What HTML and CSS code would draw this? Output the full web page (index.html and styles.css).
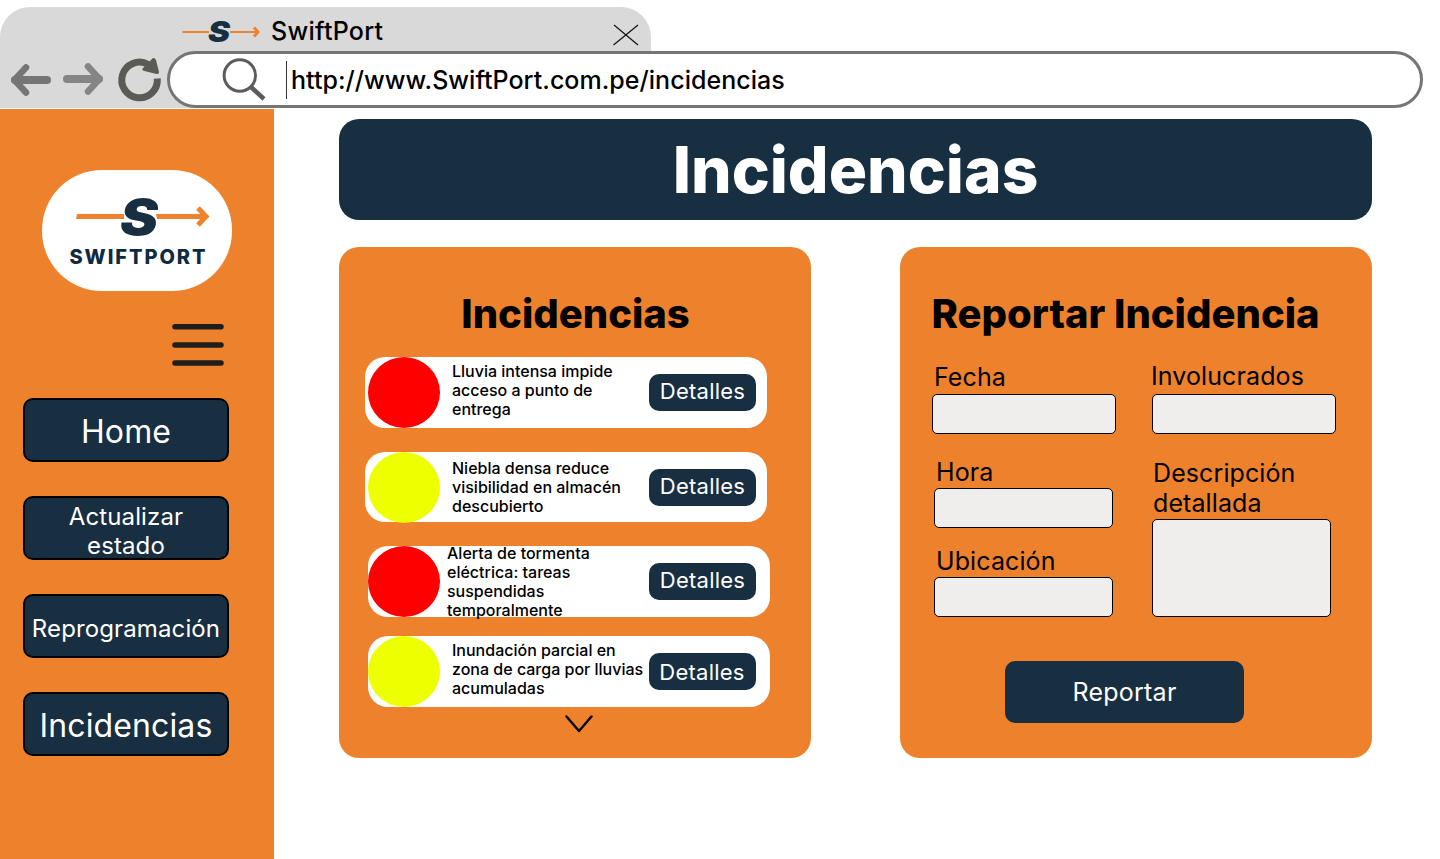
FILE: index.html
```html
<!DOCTYPE html>
<html lang="es">
<head>
<meta charset="utf-8">
<title>SwiftPort</title>
<link rel="stylesheet" href="styles.css">
</head>
<body>
<header class="browser">
  <div class="tab">
    <svg class="tab-logo" width="78" height="24" viewBox="0 0 78 24">
      <path d="M0.500 12H27M48 12H75" fill="none" stroke="#ee822d" stroke-width="2.200"/>
      <path d="M72 7.500l4 4.500-4 4.500" fill="none" stroke="#ee822d" stroke-width="3"/>
      <text class="mark" x="26" y="22" font-size="29" textLength="22" lengthAdjust="spacingAndGlyphs">S</text>
    </svg>
    <span class="tab-name">SwiftPort</span>
    <svg class="tab-close" width="26" height="22" viewBox="0 0 26 22"><path d="M1 1l24 20M25 1L.5 21" stroke="#111" stroke-width="1.200"/></svg>
  </div>
  <div class="toolbar">
    <svg class="tools" width="167" height="57" viewBox="0 0 167 57">
      <g fill="none" stroke-linecap="round" stroke-linejoin="round">
        <path d="M47 29H15" stroke="#757575" stroke-width="8"/>
        <path d="M26 16.500L14.500 29l11.500 12.500" stroke="#757575" stroke-width="6.500"/>
        <path d="M67 28h32" stroke="#858585" stroke-width="8"/>
        <path d="M88 15.500L99.500 28 88 40.500" stroke="#858585" stroke-width="6.500"/>
      </g>
      <path d="M157.300 27.500A17.800 17.800 0 1 1 148 13.300" fill="none" stroke="#5a5a57" stroke-width="7"/>
      <path d="M151.500 8.500Q154 5.500 156 9l3 12q.3 2.500-2.500 2l-12-3q-3.500-1-1.500-3z" fill="#5a5a57"/>
    </svg>
    <div class="address">
      <svg width="44" height="44" viewBox="0 0 44 44" fill="none" stroke="#5c5c5c">
        <circle cx="17.800" cy="17.500" r="15.700" stroke-width="3"/><path d="M29 29l13 12" stroke-width="4.500"/>
      </svg>
      <span class="caret"></span>
      <span class="url">http://www.SwiftPort.com.pe/incidencias</span>
    </div>
  </div>
</header>
<div class="page">
  <aside class="sidebar">
    <div class="brand">
      <svg width="190" height="121" viewBox="0 0 190 121">
        <path d="M35 44L34 49H82V44zM114 44H161V49H115z" fill="#ee822d"/>
        <path d="M156 38l8 8.500-8 8.500" fill="none" stroke="#ee822d" stroke-width="5"/>
        <text class="mark" x="78" y="65" font-size="50" textLength="38" lengthAdjust="spacingAndGlyphs">S</text>
        <text class="wordmark" x="27.500" y="94" font-size="20" textLength="136">SWIFTPORT</text>
      </svg>
    </div>
    <svg class="menu" width="52" height="42" viewBox="0 0 52 42"><path d="M3 2.800H49M3 21H49M3 39H49" stroke="#1e1e1e" stroke-width="5.500" stroke-linecap="round"/></svg>
    <nav class="nav">
      <a class="nav-item large">Home</a>
      <a class="nav-item double">Actualizar estado</a>
      <a class="nav-item">Reprogramación</a>
      <a class="nav-item large">Incidencias</a>
    </nav>
  </aside>
  <main class="main">
    <h1 class="banner">Incidencias</h1>
    <div class="panels">
      <section class="panel list">
        <h2>Incidencias</h2>
        <article class="incident">
          <span class="level red"></span>
          <p class="summary">Lluvia intensa impide acceso a punto de entrega</p>
          <a class="details">Detalles</a>
        </article>
        <article class="incident second">
          <span class="level yellow"></span>
          <p class="summary lower">Niebla densa reduce visibilidad en almacén descubierto</p>
          <a class="details">Detalles</a>
        </article>
        <article class="incident third inset">
          <span class="level red"></span>
          <p class="summary tall">Alerta de tormenta eléctrica: tareas suspendidas temporalmente</p>
          <a class="details">Detalles</a>
        </article>
        <article class="incident fourth inset">
          <span class="level yellow"></span>
          <p class="summary">Inundación parcial en<br>zona de carga por lluvias acumuladas</p>
          <a class="details last">Detalles</a>
        </article>
        <svg class="more" width="28" height="18" viewBox="0 0 28 18"><path d="M1.500 1.500L14 16 26.500 1.500" fill="none" stroke="#000" stroke-width="2.400" stroke-linecap="round" stroke-linejoin="round"/></svg>
      </section>
      <section class="panel report">
        <h2>Reportar Incidencia</h2>
        <div class="form">
          <div class="column">
            <label class="date">Fecha</label>
            <div class="field wide"></div>
            <label class="time">Hora</label>
            <div class="field indent"></div>
            <label class="place">Ubicación</label>
            <div class="field indent"></div>
          </div>
          <div class="column">
            <label class="people">Involucrados</label>
            <div class="field wide"></div>
            <label class="description">Descripción detallada</label>
            <div class="field area"></div>
          </div>
        </div>
        <a class="submit">Reportar</a>
      </section>
    </div>
  </main>
</div>
</body>
</html>
```
FILE: styles.css
```css
* { box-sizing: border-box; }
body { margin: 0; height: 859px; overflow: hidden; background: #fff; color: #000; font-family: Inter, "Liberation Sans", sans-serif; font-weight: 400; }
svg { display: block; flex: none; }
h1, h2, p { margin: 0; }
.browser { height: 109px; padding-top: 7px; }
.tab { display: flex; width: 651px; height: 44px; padding-left: 182px; background: #d9d9d9; border-radius: 30px 30px 0 0; }
.tab-logo { margin-top: 13px; overflow: visible; }
.tab-name { width: 342px; margin: 9px 0 0 11px; font-size: 25px; line-height: 30px; font-weight: 500; letter-spacing: 0.28px; white-space: nowrap; }
.tab-close { margin-top: 17px; }
.toolbar { display: flex; height: 57px; background: linear-gradient(#d9d9d9, #d9d9d9) 0 0 / 651px 57px no-repeat; }
.address { display: flex; width: 1256px; height: 57px; padding-left: 52px; background: #fff; border: 3px solid #757575; border-radius: 29px; }
.address svg { margin-top: 4px; }
.caret { flex: none; width: 1px; height: 38px; margin: 7px 4px 0 20px; background: #333; }
.url { margin-top: 11px; font-size: 25px; line-height: 30px; font-weight: 500; letter-spacing: 0.03px; white-space: nowrap; }
.mark { font-family: Inter, sans-serif; font-weight: 900; font-style: italic; fill: #182f42; }
.wordmark { font-family: Inter, sans-serif; font-weight: 800; fill: #0f2b40; }

.page { display: flex; height: 750px; }
.sidebar { width: 274px; padding: 61px 0 0 23px; background: #ee812c; flex: none; }
.brand { width: 190px; height: 121px; margin-left: 19px; background: #fff; border-radius: 60px; }
.menu { margin: 33px 0 32px 149px; }
.nav { display: flex; flex-direction: column; gap: 34px; width: 206px; }
.nav-item { height: 64px; padding-top: 18px; background: #182e41; border: 2px solid #000; border-radius: 10px; color: #fff; font-size: 24px; line-height: 29px; letter-spacing: 0.12px; text-align: center; }
.nav-item.large { padding-top: 12px; font-size: 32px; line-height: 39px; }
.nav-item.double { padding: 4px 30px 0; }

.main { width: 1033px; margin: 10px 0 0 65px; }
.banner { height: 101px; background: #182e41; border-radius: 20px; color: #fff; font-size: 64px; line-height: 101px; font-weight: 800; text-align: center; }
.panels { display: flex; justify-content: space-between; margin-top: 27px; }
.panel { width: 472px; height: 511px; padding-top: 43px; background: #ee812c; border-radius: 20px; }
.panel h2 { font-size: 40px; line-height: 48px; font-weight: 800; white-space: nowrap; text-align: center; }
.list h2 { padding-left: 1px; }
.report h2 { padding-right: 21px; }
.incident { display: flex; width: 402px; height: 71px; margin: 19px 0 0 26px; padding-left: 3px; background: #fff; border-radius: 20px; }
.incident.second { height: 70px; margin-top: 24px; }
.incident.third { margin-top: 24px; }
.incident.fourth { margin-top: 19px; }
.incident.inset { margin-left: 29px; padding-left: 0; }
.level { flex: none; width: 72px; height: 71px; border-radius: 50%; }
.red { background: #f00; }
.yellow { background: #eeff00; }
.summary { flex: none; width: 197px; padding: 5px 20px 0 0; margin-left: 12px; font-size: 16px; line-height: 19px; font-weight: 500; }
.fourth .summary { padding-right: 0; }
.summary.lower { padding-top: 7px; }
.summary.tall { width: 202px; margin: -2px 0 0 7px; padding: 0 50px 0 0; }
.details { flex: none; width: 107px; height: 37px; margin-top: 17px; background: #182e41; border-radius: 10px; color: #fff; font-size: 22px; line-height: 35px; letter-spacing: 0.25px; text-align: center; }
.details.last { line-height: 38px; padding-right: 1px; }
.more { margin: 8px 0 0 226px; }

.form { display: flex; gap: 36px; padding: 23px 0 0 32px; }
.column { width: 184px; }
.column label { display: block; font-size: 25px; line-height: 30px; letter-spacing: 0.1px; }
.field { width: 179px; height: 40px; background: #efeeec; border: 1px solid #000; border-radius: 5px; }
.field.wide { width: 184px; }
.field.indent { margin-left: 2px; }
.field.area { height: 98px; }
.date { margin: 1px 0 2px 2px; }
.time { margin: 23px 0 1px 4px; }
.place { margin: 18px 0 1px 4px; }
.people { margin: 0 0 3px -1px; }
.description { margin: 24px 0 1px 1px; }
.submit { display: block; width: 239px; height: 62px; margin: 44px 0 0 105px; background: #182e41; border-radius: 10px; color: #fff; font-size: 25px; line-height: 62px; letter-spacing: 0.25px; text-align: center; }
```
